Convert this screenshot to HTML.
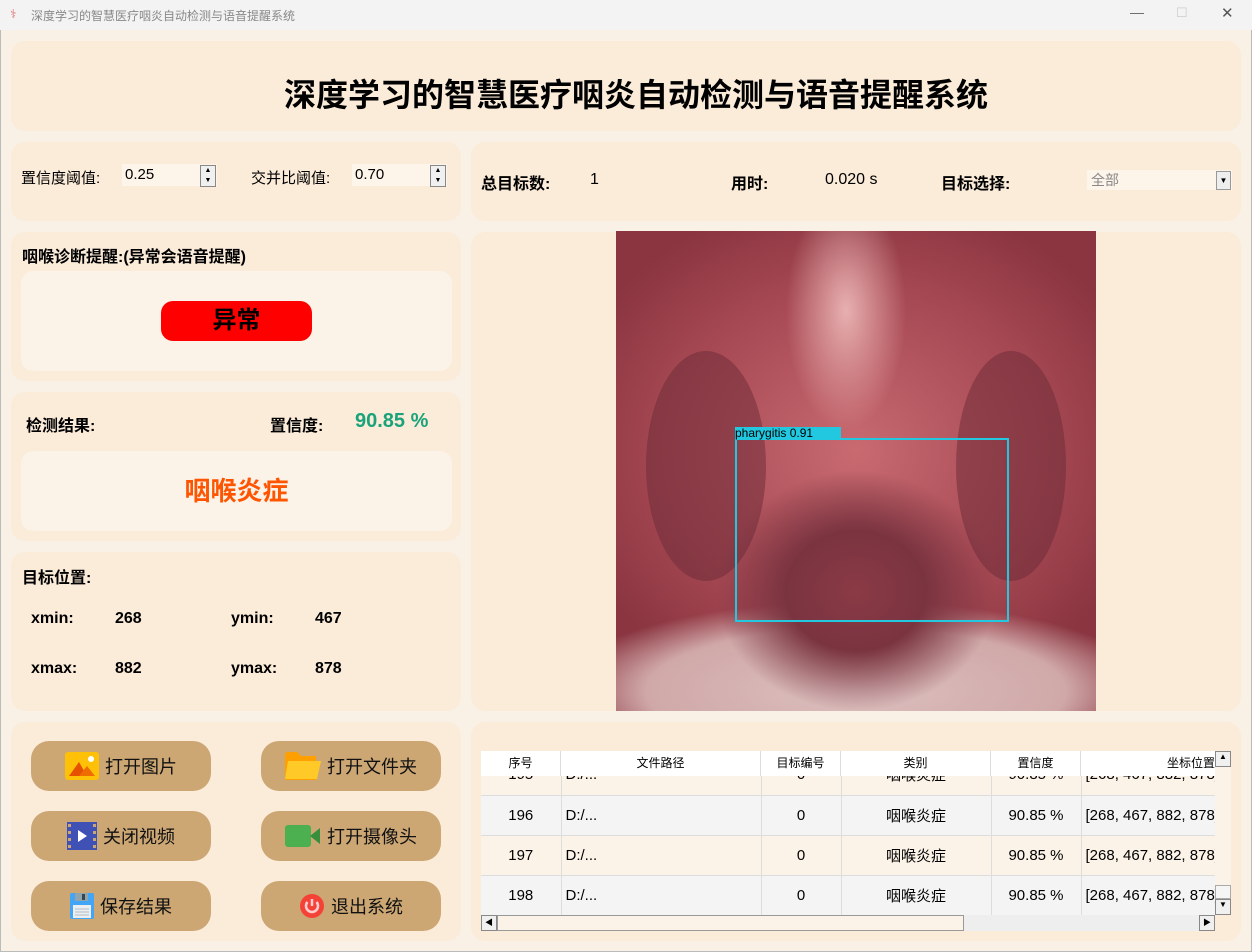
<!DOCTYPE html>
<html><head><meta charset="utf-8"><style>
*{box-sizing:border-box;margin:0;padding:0}
body{width:1252px;height:952px;background:#faf1e6;font-family:"Liberation Sans","Noto Sans CJK SC",sans-serif;position:relative;overflow:hidden;outline:1px solid #bbb;outline-offset:-1px}
.a{position:absolute}
.p{position:absolute;background:#fbebd9;border-radius:14px}
.lbl{position:absolute;font-size:16px;font-weight:bold;color:#000}
.btn{position:absolute;width:180px;height:50px;background:#cca774;border-radius:18px;display:flex;align-items:center;justify-content:center;font-size:18px;color:#111;gap:6px}
.spin{position:absolute;background:#fdf4ea;height:22px;font-size:15px;padding-left:3px;line-height:22px}
.sb{position:absolute;width:16px;height:22px;border:1px solid #888;background:#f0f0f0;font-size:7px;text-align:center;line-height:10px}
table{border-collapse:collapse;font-size:15px;table-layout:fixed}
td{text-align:center;border-right:1px solid #ddd;border-bottom:1px solid #ddd;height:40px;overflow:hidden;white-space:nowrap}
</style></head><body>
<div class="a" style="left:0;top:0;width:1252px;height:30px;background:#f3f3f3"></div>
<div class="a" style="left:10px;top:7px;font-size:12px;color:#e07070">⚕</div>
<div class="a" style="left:31px;top:7px;font-size:12px;color:#888">深度学习的智慧医疗咽炎自动检测与语音提醒系统</div>
<div class="a" style="left:1130px;top:4px;font-size:14px;color:#666">—</div>
<div class="a" style="left:1176px;top:5px;font-size:13px;color:#ccc">☐</div>
<div class="a" style="left:1221px;top:4px;font-size:15px;color:#555">✕</div>

<div class="p" style="left:11px;top:41px;width:1230px;height:90px"></div>
<div class="a" style="left:0;width:1272px;top:70px;text-align:center;font-size:32px;font-weight:bold">深度学习的智慧医疗咽炎自动检测与语音提醒系统</div>

<div class="p" style="left:11px;top:142px;width:450px;height:79px"></div>
<div class="a" style="left:21px;top:167px;font-size:15px">置信度阈值:</div>
<div class="spin" style="left:122px;top:164px;width:95px">0.25</div><div class="sb" style="left:200px;top:165px">▲<br>▼</div>
<div class="a" style="left:251px;top:167px;font-size:15px">交并比阈值:</div>
<div class="spin" style="left:352px;top:164px;width:95px">0.70</div><div class="sb" style="left:430px;top:165px">▲<br>▼</div>

<div class="p" style="left:471px;top:142px;width:770px;height:79px"></div>
<div class="lbl" style="left:481px;top:170px">总目标数:</div>
<div class="a" style="left:590px;top:171px;font-size:16px">1</div>
<div class="lbl" style="left:731px;top:170px">用时:</div>
<div class="a" style="left:825px;top:171px;font-size:16px">0.020 s</div>
<div class="lbl" style="left:941px;top:170px">目标选择:</div>
<div class="a" style="left:1087px;top:170px;width:145px;height:20px;background:#fdf4ea;font-size:14px;color:#888;padding-left:4px;line-height:20px">全部</div>
<div class="a" style="left:1216px;top:171px;width:15px;height:19px;border:1px solid #999;background:#eee;font-size:8px;text-align:center;line-height:18px">▼</div>

<div class="p" style="left:11px;top:232px;width:450px;height:149px"></div>
<div class="lbl" style="left:22px;top:243px">咽喉诊断提醒:(异常会语音提醒)</div>
<div class="a" style="left:21px;top:271px;width:431px;height:100px;background:#fbf2e8;border-radius:12px"></div>
<div class="a" style="left:161px;top:301px;width:151px;height:40px;background:#ff0000;border-radius:12px;text-align:center;font-size:24px;font-weight:bold;line-height:40px">异常</div>

<div class="p" style="left:11px;top:392px;width:450px;height:149px"></div>
<div class="lbl" style="left:26px;top:412px">检测结果:</div>
<div class="lbl" style="left:270px;top:412px">置信度:</div>
<div class="a" style="left:355px;top:410px;font-size:20px;font-weight:bold;color:#1aa37a">90.85 %</div>
<div class="a" style="left:21px;top:451px;width:431px;height:80px;background:#fbf2e8;border-radius:12px;text-align:center;line-height:80px;font-size:26px;font-weight:bold;color:#ff5500">咽喉炎症</div>

<div class="p" style="left:11px;top:552px;width:450px;height:159px"></div>
<div class="lbl" style="left:22px;top:564px">目标位置:</div>
<div class="lbl" style="left:31px;top:610px">xmin:</div><div class="lbl" style="left:115px;top:610px">268</div>
<div class="lbl" style="left:231px;top:610px">ymin:</div><div class="lbl" style="left:315px;top:610px">467</div>
<div class="lbl" style="left:31px;top:660px">xmax:</div><div class="lbl" style="left:115px;top:660px">882</div>
<div class="lbl" style="left:231px;top:660px">ymax:</div><div class="lbl" style="left:315px;top:660px">878</div>

<div class="p" style="left:471px;top:232px;width:770px;height:479px"></div>
<div class="a" style="left:616px;top:231px;width:480px;height:480px;overflow:hidden;background:radial-gradient(ellipse 140px 120px at 240px 360px,#8a3a45 0%,#7a3440 50%,transparent 100%),radial-gradient(ellipse 300px 90px at 240px 460px,#dcc0bf 0%,#d0a8a8 70%,transparent 100%),radial-gradient(ellipse 60px 120px at 230px 80px,#e8b0b0,transparent),radial-gradient(ellipse 300px 260px at 240px 220px,#c86a70 0%,#a84a55 60%,#8a3540 100%)">
<div class="a" style="left:30px;top:120px;width:120px;height:230px;border-radius:50%;background:#6a2a35;opacity:.5"></div>
<div class="a" style="left:340px;top:120px;width:110px;height:230px;border-radius:50%;background:#6a2a35;opacity:.5"></div>
</div>
<div class="a" style="left:735px;top:438px;width:274px;height:184px;border:2px solid #22c8e0"></div>
<div class="a" style="left:735px;top:427px;width:106px;height:12px;background:#22c8e0;font-size:12px;line-height:12px;color:#000">pharygitis 0.91</div>

<div class="p" style="left:11px;top:722px;width:450px;height:219px"></div>
<div class="btn" style="left:31px;top:741px"><svg width="34" height="28"><rect width="34" height="28" rx="3" fill="#ffc107"/><path d="M4 24 L14 10 L22 24Z" fill="#e65100"/><path d="M14 24 L22 14 L30 24Z" fill="#ef6c00"/><circle cx="26" cy="7" r="3" fill="#fff"/></svg>打开图片</div>
<div class="btn" style="left:261px;top:741px"><svg width="36" height="28"><path d="M0 3 Q0 0 3 0 H12 L16 4 H31 V28 H0Z" fill="#ffa000"/><path d="M3 9 H36 L32 27 H0Z" fill="#ffca28"/></svg>打开文件夹</div>
<div class="btn" style="left:31px;top:811px"><svg width="30" height="28"><rect width="30" height="28" fill="#3f51b5"/><g fill="#c9a777"><rect x="1" y="2" width="3" height="3"/><rect x="1" y="9" width="3" height="3"/><rect x="1" y="16" width="3" height="3"/><rect x="1" y="23" width="3" height="3"/><rect x="26" y="2" width="3" height="3"/><rect x="26" y="9" width="3" height="3"/><rect x="26" y="16" width="3" height="3"/><rect x="26" y="23" width="3" height="3"/></g><path d="M11 8 L20 14 L11 20Z" fill="#fff"/></svg>关闭视频</div>
<div class="btn" style="left:261px;top:811px"><svg width="36" height="22"><rect width="26" height="22" rx="3" fill="#4caf50"/><path d="M25 11 L35 3 V19Z" fill="#388e3c"/></svg>打开摄像头</div>
<div class="btn" style="left:31px;top:881px"><svg width="24" height="26"><rect width="24" height="26" rx="2" fill="#42a5f5"/><rect x="5" y="0" width="13" height="8" fill="#90a4ae"/><rect x="12" y="1" width="3" height="6" fill="#37474f"/><rect x="3" y="12" width="18" height="13" fill="#eceff1"/><path d="M5 16H19M5 19H19M5 22H19" stroke="#b0bec5"/></svg>保存结果</div>
<div class="btn" style="left:261px;top:881px"><svg width="26" height="26"><circle cx="13" cy="13" r="12" fill="#f44336"/><path d="M8.5 9 A6 6 0 1 0 17.5 9" stroke="#ffcdd2" stroke-width="2.5" fill="none"/><path d="M13 6 V13" stroke="#ffcdd2" stroke-width="2.5"/></svg>退出系统</div>

<div class="p" style="left:471px;top:722px;width:770px;height:219px"></div>
<div class="a" style="left:481px;top:751px;width:734px;height:164px;overflow:hidden">
<table style="position:absolute;top:4px;left:0;width:734px">
<colgroup><col style="width:80px"><col style="width:200px"><col style="width:80px"><col style="width:150px"><col style="width:90px"><col style="width:134px"></colgroup>
<tr style="background:#fbf2e8"><td>195</td><td style="text-align:left;padding-left:4px">D:/...</td><td>0</td><td>咽喉炎症</td><td>90.85 %</td><td style="text-align:left;padding-left:4px">[268, 467, 882, 878]</td></tr>
<tr style="background:#f4f4f4"><td>196</td><td style="text-align:left;padding-left:4px">D:/...</td><td>0</td><td>咽喉炎症</td><td>90.85 %</td><td style="text-align:left;padding-left:4px">[268, 467, 882, 878]</td></tr>
<tr style="background:#fbf2e8"><td>197</td><td style="text-align:left;padding-left:4px">D:/...</td><td>0</td><td>咽喉炎症</td><td>90.85 %</td><td style="text-align:left;padding-left:4px">[268, 467, 882, 878]</td></tr>
<tr style="background:#f4f4f4"><td>198</td><td style="text-align:left;padding-left:4px">D:/...</td><td>0</td><td>咽喉炎症</td><td>90.85 %</td><td style="text-align:left;padding-left:4px">[268, 467, 882, 878]</td></tr>
</table>
<div class="a" style="left:0;top:0;width:734px;height:25px;background:#fff;font-size:12px;display:flex;line-height:25px;color:#000">
<div style="width:80px;text-align:center;border-right:1px solid #ddd">序号</div><div style="width:200px;text-align:center;border-right:1px solid #ddd">文件路径</div><div style="width:80px;text-align:center;border-right:1px solid #ddd">目标编号</div><div style="width:150px;text-align:center;border-right:1px solid #ddd">类别</div><div style="width:90px;text-align:center;border-right:1px solid #ddd">置信度</div><div style="width:134px;text-align:right;white-space:nowrap;overflow:hidden">坐标位置</div></div>
</div>
<div class="a" style="left:1215px;top:751px;width:16px;height:164px;background:#fbf2e8"><div style="height:16px;border:1px solid #888;background:#f0f0f0;font-size:8px;text-align:center">▲</div><div style="margin-top:118px;height:14px;border:1px solid #aaa;background:#f5f5f5"></div><div style="height:16px;border:1px solid #888;background:#f0f0f0;font-size:8px;text-align:center">▼</div></div>
<div class="a" style="left:481px;top:915px;width:734px;height:16px;background:#eee"><div class="a" style="left:0;width:16px;height:16px;border:1px solid #888;background:#f0f0f0;font-size:8px;text-align:center;line-height:14px">◀</div><div class="a" style="left:16px;width:467px;height:16px;border:1px solid #999;background:#fbf2e8"></div><div class="a" style="left:718px;width:16px;height:16px;border:1px solid #888;background:#f0f0f0;font-size:8px;text-align:center;line-height:14px">▶</div></div>
</body></html>
